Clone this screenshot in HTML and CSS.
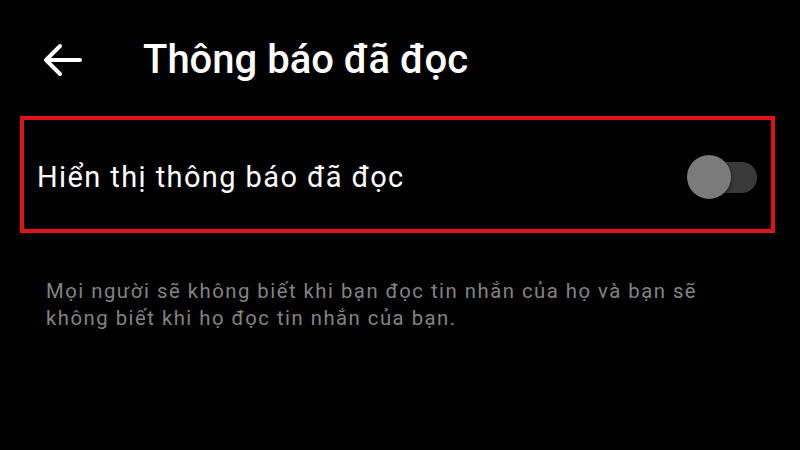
FILE: index.html
```html
<!DOCTYPE html>
<html lang="vi">
<head>
<meta charset="utf-8">
<link rel="stylesheet" href="styles.css">
</head>
<body>
<div class="screen">
  <header class="topbar">
    <svg class="back" width="42" height="34" viewBox="0 0 42 34">
      <path d="M39 17H5M19 3L5 17l14 14" fill="none" stroke="#fff" stroke-width="4" stroke-linecap="round" stroke-linejoin="round"/>
    </svg>
    <h1 class="title">Thông báo đã đọc</h1>
  </header>
  <section class="setting">
    <span class="label">Hiển thị thông báo đã đọc</span>
    <span class="toggle"><span class="track"></span><span class="thumb"></span></span>
  </section>
  <p class="desc">Mọi người sẽ không biết khi bạn đọc tin nhắn của họ và bạn sẽ<br>không biết khi họ đọc tin nhắn của bạn.</p>
</div>
</body>
</html>
```
FILE: styles.css
```css
html, body { margin: 0; padding: 0; background: #000; }
.screen { width: 800px; height: 450px; background: #000; font-family: Roboto, "Noto Sans", sans-serif; overflow: hidden; }
.topbar { display: flex; align-items: center; height: 60px; padding: 30px 0 0 41px; }
.back { display: block; }
.title { margin: 0 0 0 60px; color: #fff; font-size: 40px; font-weight: 500; line-height: 46px; }
.setting { margin: 26px 0 0 20px; width: 755px; height: 117px; box-sizing: border-box; border: 4px solid #e0121a; display: flex; align-items: center; justify-content: space-between; padding: 4px 14px 0 13px; }
.label { color: #fff; font-size: 29px; letter-spacing: 1.4px; line-height: 36px; }
.toggle { position: relative; width: 70px; height: 44px; display: block; }
.track { position: absolute; right: 0; top: 7px; width: 58px; height: 31px; border-radius: 16px; background: #3a3a3a; }
.thumb { position: absolute; left: 0; top: 0; width: 44px; height: 44px; border-radius: 50%; background: #7b7b7b; box-shadow: 0 2px 4px rgba(0,0,0,.6); }
.desc { margin: 45px 0 0 46px; color: #838383; font-size: 20.3px; letter-spacing: 1.5px; line-height: 27px; }
```
